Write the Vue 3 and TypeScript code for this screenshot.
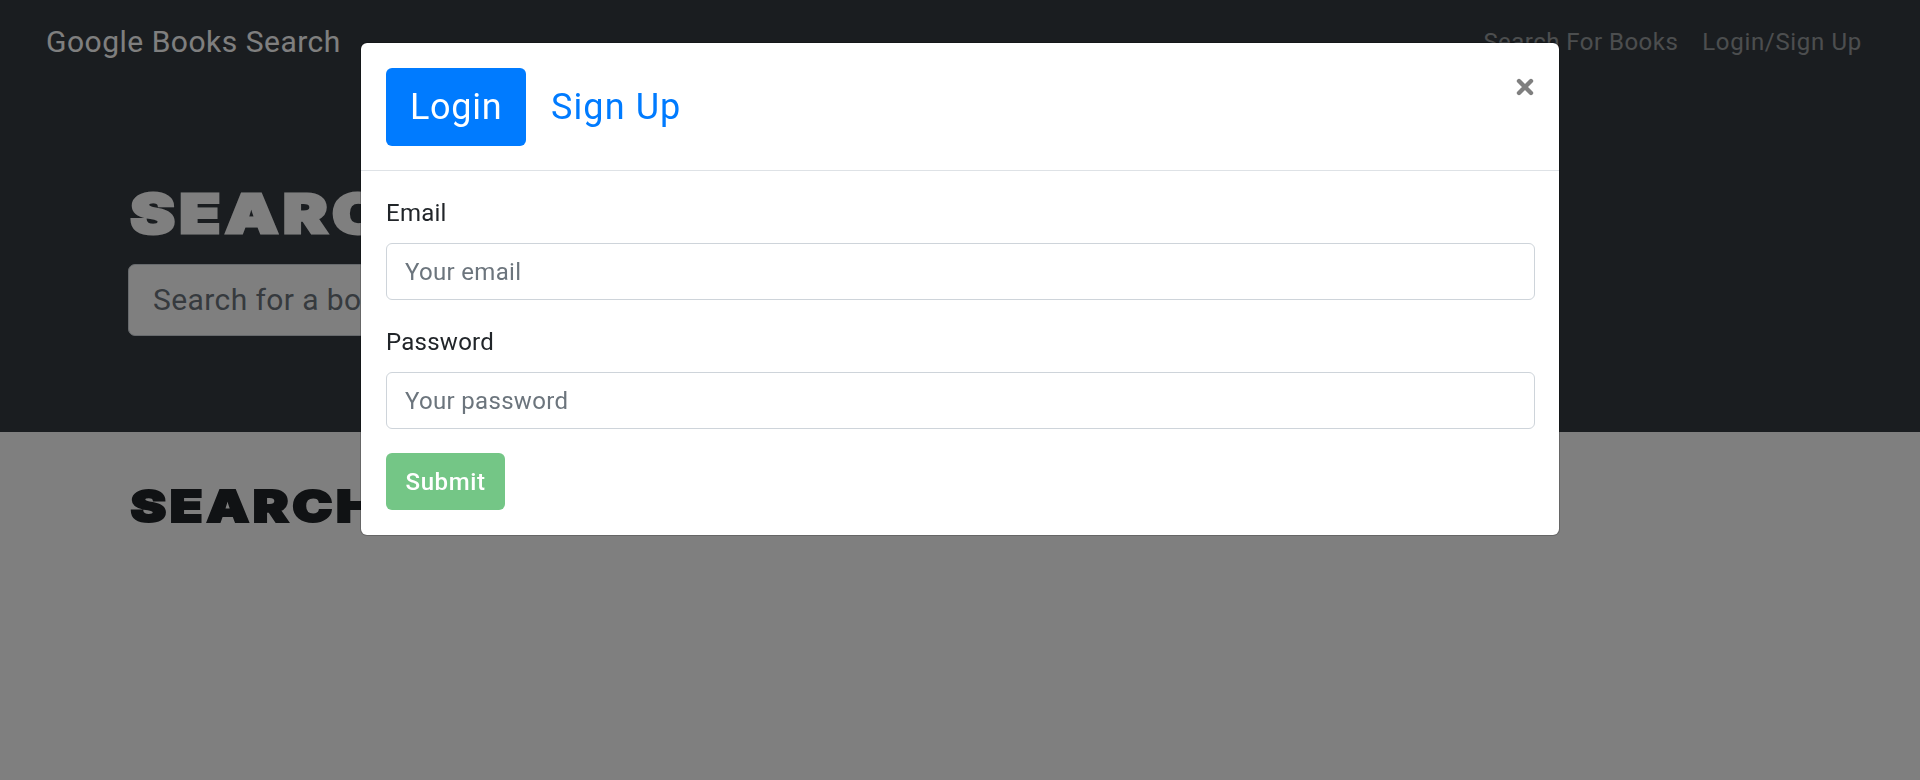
<script setup lang="ts">
import { ref } from 'vue'

type Tab = 'login' | 'signup'

const activeTab = ref<Tab>('login')
const email = ref('')
const password = ref('')
const query = ref('')
</script>

<template>
  <div class="page">
    <header class="navbar">
      <a class="brand">Google Books Search</a>
      <nav class="links">
        <a class="books-link">Search For Books</a>
        <a class="login-link">Login/Sign Up</a>
      </nav>
    </header>
    <section class="hero">
      <h1>SEARCH FOR BOOKS!</h1>
      <input v-model="query" class="search" type="text" placeholder="Search for a book" />
    </section>
    <main class="results">
      <h2>SEARCH FOR A BOOK TO BEGIN</h2>
    </main>

    <div class="backdrop">
      <div class="modal" role="dialog" aria-modal="true">
        <div class="modal-header">
          <div class="tabs">
            <button class="tab tab-login" :class="{ active: activeTab === 'login' }" @click="activeTab = 'login'"><span>Login</span></button>
            <button class="tab tab-signup" :class="{ active: activeTab === 'signup' }" @click="activeTab = 'signup'"><span>Sign Up</span></button>
          </div>
          <button class="close" aria-label="Close">
            <svg width="18" height="18" viewBox="0 0 18 18"><path d="M3 3 15 15M15 3 3 15" /></svg>
          </button>
        </div>
        <form class="modal-body" @submit.prevent>
          <label class="email-label" for="email">Email</label>
          <input id="email" v-model="email" class="field email" type="text" placeholder="Your email" />
          <label class="password-label" for="password">Password</label>
          <input id="password" v-model="password" class="field password" type="password" placeholder="Your password" />
          <button class="submit" type="submit" :disabled="!(email && password)">Submit</button>
        </form>
      </div>
    </div>
  </div>
</template>

<style>
body {
  margin: 0;
  overflow: hidden;
}
</style>

<style scoped>
* {
  box-sizing: border-box;
}
.page {
  height: 780px;
  background: #fff;
  color: #212529;
  font: 400 24px/36px Roboto, "Liberation Sans", sans-serif;
  overflow: hidden;
}
button,
input {
  font-family: inherit;
  margin: 0;
}
.navbar {
  height: 84px;
  padding: 0 58px 0 46px;
  background: #343a40;
  display: flex;
  align-items: center;
  justify-content: space-between;
}
.brand {
  color: #fff;
  font-size: 30px;
  letter-spacing: 0.5px;
  white-space: nowrap;
}
.links {
  display: flex;
  gap: 24px;
  color: rgba(255, 255, 255, 0.5);
}
.books-link {
  letter-spacing: 0.47px;
}
.login-link {
  letter-spacing: 0.68px;
}
.hero {
  height: 348px;
  padding: 96px 128px 0;
  background: #343a40;
}
h1,
h2 {
  margin: 0;
  padding-left: 2px;
  font-family: Inter, sans-serif;
  font-weight: 900;
  white-space: nowrap;
  transform-origin: left center;
}
h1 {
  color: #fff;
  font-size: 54px;
  line-height: 68px;
  letter-spacing: 4px;
  -webkit-text-stroke: 3px #fff;
  transform: scaleX(1.23);
}
.search {
  display: block;
  width: 1104px;
  height: 72px;
  margin-top: 16px;
  padding: 0 24px 2px;
  border: 1px solid #ced4da;
  border-radius: 7px;
  background: #fff;
  font-size: 30px;
  letter-spacing: 0.4px;
}
input::placeholder {
  color: #6c757d;
  opacity: 1;
}
.results {
  padding: 46px 128px;
}
h2 {
  font-size: 44px;
  line-height: 56px;
  letter-spacing: 3px;
  -webkit-text-stroke: 2px #212529;
  transform: scaleX(1.22);
}
.backdrop {
  position: fixed;
  inset: 0;
  padding-top: 42px;
  background: rgba(0, 0, 0, 0.5);
}
.modal {
  width: 1200px;
  height: 494px;
  margin: 0 auto;
  border: 1px solid rgba(0, 0, 0, 0.2);
  border-radius: 7px;
  background: #fff;
  background-clip: padding-box;
}
.modal-header {
  height: 128px;
  padding: 25px 25px 0;
  border-bottom: 1px solid #dee2e6;
  display: flex;
  justify-content: space-between;
}
.tabs {
  display: flex;
}
.tab {
  height: 78px;
  padding: 0 24px;
  border: 0;
  border-radius: 6px;
  background: transparent;
  color: #007bff;
  font-size: 36px;
  line-height: 54px;
  text-align: left;
  white-space: nowrap;
}
.tab.active {
  background: #007bff;
  color: #fff;
}
.tab-login {
  width: 140px;
  letter-spacing: 0.7px;
}
.tab-signup {
  padding-left: 25px;
  letter-spacing: 1.1px;
}
.close {
  width: 18px;
  height: 18px;
  margin-top: 10px;
  margin-right: 0.5px;
  padding: 0;
  border: 0;
  background: none;
}
.close svg {
  display: block;
  fill: none;
  stroke: #7f7f7f;
  stroke-width: 4.4;
  stroke-linecap: round;
}
.modal-body {
  padding: 24px 24px 0 25px;
}
label {
  display: block;
  height: 36px;
  margin-bottom: 12px;
  letter-spacing: 0.25px;
}
.field {
  display: block;
  width: 100%;
  height: 57px;
  margin-bottom: 24px;
  padding: 0 18px;
  border: 1px solid #ced4da;
  border-radius: 6px;
  font-size: 24px;
  letter-spacing: 0.32px;
}
.submit {
  display: block;
  width: 119px;
  height: 57px;
  padding: 0;
  border: 0;
  border-radius: 6px;
  background: #74c686;
  color: #fff;
  font-size: 24px;
  font-weight: 500;
  letter-spacing: 0.6px;
}
</style>
